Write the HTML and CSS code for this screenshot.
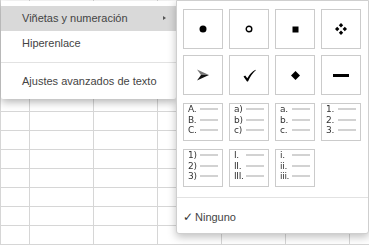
FILE: index.html
```html
<!DOCTYPE html>
<html lang="es">
<head>
    <meta charset="UTF-8">
    <meta name="viewport" content="width=device-width, initial-scale=1.0">
    <title>Viñetas y numeración</title>
    <link rel="stylesheet" href="styles.css">
</head>
<body>
    <div class="sheet"></div>

    <div class="context-menu">
        <div class="menu-item active">Viñetas y numeración<span class="submenu-arrow"></span></div>
        <div class="menu-item">Hiperenlace</div>
        <div class="menu-separator"></div>
        <div class="menu-item">Ajustes avanzados de texto</div>
    </div>

    <div class="bullets-panel">
        <div class="bullet-grid">
            <div class="bullet-cell">
                <svg width="8" height="8" viewBox="0 0 8 8"><circle cx="4" cy="4" r="3.5" fill="#000"/></svg>
            </div>
            <div class="bullet-cell">
                <svg width="8" height="8" viewBox="0 0 8 8"><circle cx="4" cy="4" r="2.8" fill="none" stroke="#000" stroke-width="1.4"/></svg>
            </div>
            <div class="bullet-cell">
                <svg width="7" height="7" viewBox="0 0 7 7"><rect x="0.5" y="0.5" width="6" height="6" fill="#000"/></svg>
            </div>
            <div class="bullet-cell">
                <svg width="12" height="12" viewBox="0 0 12 12">
                    <path d="M6 0 L8.2 2.2 L6 4.4 L3.8 2.2 Z M6 7.6 L8.2 9.8 L6 12 L3.8 9.8 Z M0 6 L2.2 3.8 L4.4 6 L2.2 8.2 Z M7.6 6 L9.8 3.8 L12 6 L9.8 8.2 Z" fill="#000"/>
                </svg>
            </div>
            <div class="bullet-cell">
                <svg width="12" height="12" viewBox="0 0 12 12">
                    <path d="M0 0.5 L12 6 L4 6 Z" fill="#777"/>
                    <path d="M4 6 L12 6 L0 11.5 Z" fill="#111"/>
                </svg>
            </div>
            <div class="bullet-cell">
                <svg width="13" height="13" viewBox="0 0 13 13">
                    <path d="M0.5 7.5 L2.2 6.4 L4.3 9.2 Q7.5 3.5 12.5 0.8 L12.8 1.3 Q8.3 5 5 12.5 L4 12.5 Z" fill="#000"/>
                </svg>
            </div>
            <div class="bullet-cell">
                <svg width="9" height="9" viewBox="0 0 9 9"><path d="M4.5 0 L9 4.5 L4.5 9 L0 4.5 Z" fill="#000"/></svg>
            </div>
            <div class="bullet-cell">
                <svg width="16" height="3" viewBox="0 0 16 3"><rect width="16" height="3" fill="#000"/></svg>
            </div>
        </div>

        <div class="list-grid">
            <div class="list-cell">
                <div class="list-line"><span class="list-label">A.</span><span class="list-dash"></span></div>
                <div class="list-line"><span class="list-label">B.</span><span class="list-dash"></span></div>
                <div class="list-line"><span class="list-label">C.</span><span class="list-dash"></span></div>
            </div>
            <div class="list-cell">
                <div class="list-line"><span class="list-label">a)</span><span class="list-dash"></span></div>
                <div class="list-line"><span class="list-label">b)</span><span class="list-dash"></span></div>
                <div class="list-line"><span class="list-label">c)</span><span class="list-dash"></span></div>
            </div>
            <div class="list-cell">
                <div class="list-line"><span class="list-label">a.</span><span class="list-dash"></span></div>
                <div class="list-line"><span class="list-label">b.</span><span class="list-dash"></span></div>
                <div class="list-line"><span class="list-label">c.</span><span class="list-dash"></span></div>
            </div>
            <div class="list-cell">
                <div class="list-line"><span class="list-label">1.</span><span class="list-dash"></span></div>
                <div class="list-line"><span class="list-label">2.</span><span class="list-dash"></span></div>
                <div class="list-line"><span class="list-label">3.</span><span class="list-dash"></span></div>
            </div>
            <div class="list-cell">
                <div class="list-line"><span class="list-label">1)</span><span class="list-dash"></span></div>
                <div class="list-line"><span class="list-label">2)</span><span class="list-dash"></span></div>
                <div class="list-line"><span class="list-label">3)</span><span class="list-dash"></span></div>
            </div>
            <div class="list-cell">
                <div class="list-line"><span class="list-label">I.</span><span class="list-dash"></span></div>
                <div class="list-line"><span class="list-label">II.</span><span class="list-dash"></span></div>
                <div class="list-line"><span class="list-label">III.</span><span class="list-dash"></span></div>
            </div>
            <div class="list-cell">
                <div class="list-line"><span class="list-label">i.</span><span class="list-dash"></span></div>
                <div class="list-line"><span class="list-label">ii.</span><span class="list-dash"></span></div>
                <div class="list-line"><span class="list-label">iii.</span><span class="list-dash"></span></div>
            </div>
        </div>

        <div class="panel-separator"></div>
        <div class="none-item"><span class="none-check">✓</span>Ninguno</div>
    </div>
</body>
</html>
```

FILE: styles.css
```css
html, body {
    margin: 0;
    padding: 0;
    height: 100%;
    overflow: hidden;
}
body {
    font-family: "Liberation Sans", Arial, sans-serif;
    background-color: #fff;
    position: relative;
}
.sheet {
    height: 100%;
    background-color: #fff;
    background-image:
        linear-gradient(to right, #d6d6d6 1px, transparent 1px),
        linear-gradient(to right, #d6d6d6 1px, transparent 1px),
        linear-gradient(to bottom, #d6d6d6 1px, transparent 1px);
    background-size: 1px 100%, 64px 100%, 100% 19px;
    background-repeat: no-repeat, repeat, repeat;
    background-position: 0 0, 29px 0, 0 16px;
}
.context-menu {
    position: absolute;
    left: 1px;
    top: 1px;
    width: 175px;
    padding: 5px 0;
    background-color: #fff;
    box-shadow: 0 3px 8px rgba(0,0,0,0.3);
    border-radius: 0 0 2px 2px;
}
.menu-item {
    position: relative;
    height: 25px;
    line-height: 25px;
    padding-left: 21px;
    font-size: 11px;
    color: #444;
    white-space: nowrap;
}
.menu-item.active {
    background-color: #d9d9d9;
}
.submenu-arrow {
    position: absolute;
    right: 10px;
    top: 10px;
    width: 0;
    height: 0;
    border-top: 2.5px solid transparent;
    border-bottom: 2.5px solid transparent;
    border-left: 3px solid #555;
}
.menu-separator {
    height: 1px;
    margin: 6px 0 6px;
    background-color: #e2e2e2;
}
.bullets-panel {
    position: absolute;
    left: 176px;
    top: 0;
    width: 191px;
    height: 232px;
    background-color: #fff;
    border: 1px solid #cfcfcf;
    box-shadow: 0 3px 8px rgba(0,0,0,0.25);
    border-radius: 0 0 3px 3px;
}
.bullet-grid {
    display: grid;
    grid-template-columns: repeat(4, 40px);
    grid-auto-rows: 40px;
    gap: 6px;
    padding: 8px 0 0 6px;
}
.bullet-cell {
    box-sizing: border-box;
    border: 1px solid #cbcbcb;
    display: flex;
    align-items: center;
    justify-content: center;
}
.list-grid {
    display: grid;
    grid-template-columns: repeat(4, 40px);
    grid-auto-rows: 38px;
    column-gap: 6px;
    row-gap: 8px;
    padding: 8px 0 0 6px;
    will-change: transform;
}
.list-cell {
    box-sizing: border-box;
    border: 1px solid #cbcbcb;
    padding: 0 0 0 4px;
    font-family: "DejaVu Sans", sans-serif;
    font-size: 9px;
    color: #333;
    background-color: #fff;
}
.list-line {
    display: flex;
    align-items: center;
    height: 10.5px;
}
.list-label {
    width: 12px;
    letter-spacing: -0.3px;
}
.list-dash {
    width: 18px;
    height: 2px;
    background-color: #d2d2d2;
}
.panel-separator {
    height: 1px;
    margin-top: 10px;
    background-color: #e2e2e2;
}
.none-item {
    padding: 12px 0 0 6px;
    font-size: 11px;
    color: #444;
}
.none-check {
    display: inline-block;
    width: 12px;
    color: #333;
    font-family: "DejaVu Sans", sans-serif;
    font-size: 12px;
}
```
